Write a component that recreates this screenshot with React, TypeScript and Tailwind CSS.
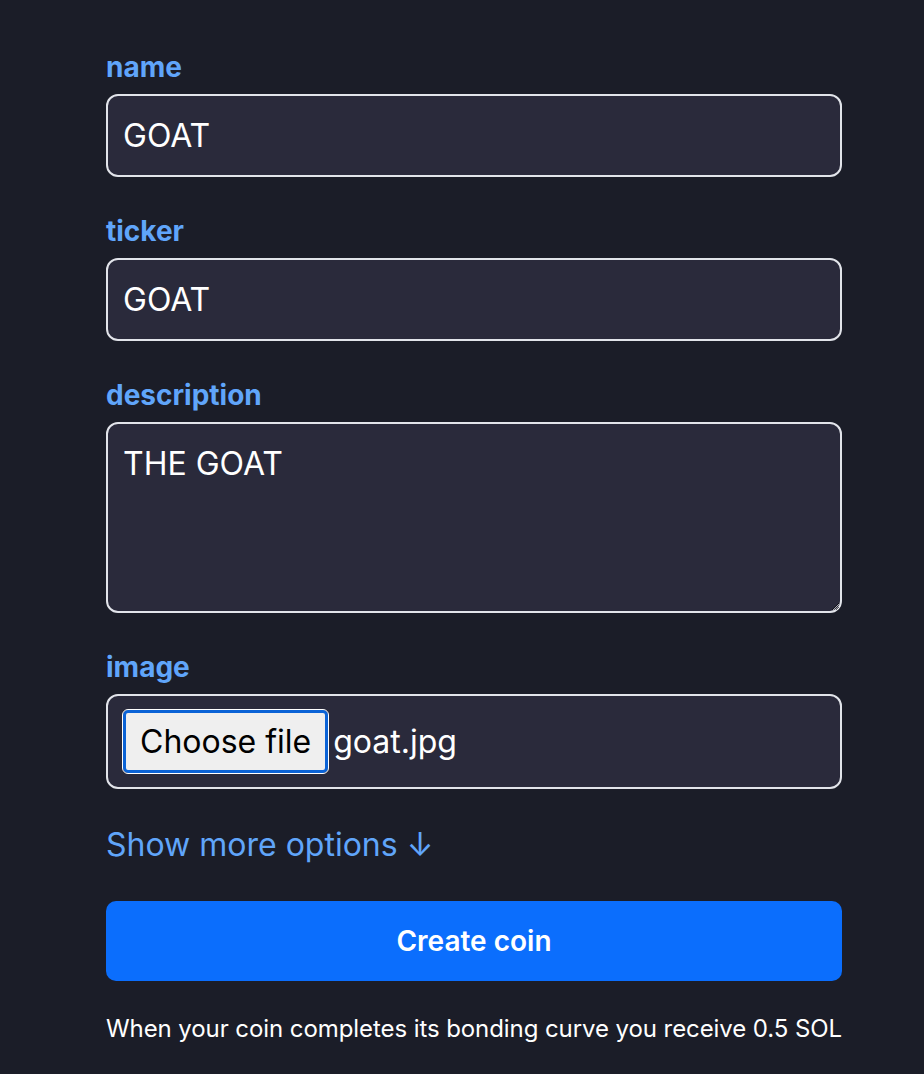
import React from 'react'

function Label({ children }: { children: React.ReactNode }) {
  return <label className="block text-[28px] font-bold leading-[34px] text-[#60a5fa]">{children}</label>
}

const fieldClass =
  'w-full rounded-[12px] border-2 border-[#e2e4ea] bg-[#2a2a3b] px-[15px] text-[32px] text-white outline-none'

export default function App() {
  return (
    <div className="min-h-[1074px] w-full bg-[#1b1d28] font-['Inter',sans-serif] text-white [color-scheme:dark]">
      <div className="ml-[106px] flex w-[736px] flex-col pt-[50px]">
        <div className="flex flex-col gap-[10px]">
          <Label>name</Label>
          <input readOnly defaultValue="GOAT" className={`h-[83px] ${fieldClass}`} />
        </div>
        <div className="mt-[37px] flex flex-col gap-[10px]">
          <Label>ticker</Label>
          <input readOnly defaultValue="GOAT" className={`h-[83px] ${fieldClass}`} />
        </div>
        <div className="mt-[37px] flex flex-col gap-[10px]">
          <Label>description</Label>
          <textarea
            readOnly
            defaultValue="THE GOAT"
            className={`h-[191px] py-[20px] leading-[40px] ${fieldClass}`}
          />
        </div>
        <div className="mt-[37px] flex flex-col gap-[10px]">
          <Label>image</Label>
          <div className="flex h-[95px] w-full items-center gap-[5px] rounded-[12px] border-2 border-[#e2e4ea] bg-[#2a2a3b] pl-[15px] pr-[14px]">
            <span className="flex h-[63px] items-center rounded-[5px] border-[3px] border-[#0b63d6] bg-[#efefef] px-[14px] text-[32px] text-black outline outline-1 outline-white">
              Choose file
            </span>
            <span className="text-[32px] text-white">goat.jpg</span>
          </div>
        </div>
        <div className="mt-[36px] text-[32px] leading-[40px] text-[#60a5fa]">Show more options ↓</div>
        <button className="mt-[36px] h-[80px] w-full rounded-[10px] bg-[#0b6efd] text-[28px] font-semibold text-white">
          Create coin
        </button>
        <p className="mt-[34px] whitespace-nowrap text-[24px] leading-[28px] tracking-[-0.08px] text-white">
          When your coin completes its bonding curve you receive 0.5 SOL
        </p>
      </div>
    </div>
  )
}
